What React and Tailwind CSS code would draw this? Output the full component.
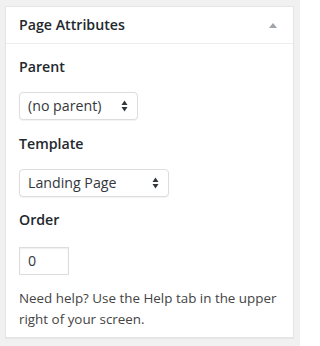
import React from "react";

function SelectBox({ value, width }) {
  return (
    <div
      className={`flex h-[28px] items-center justify-between rounded-[4px] border border-[#dddddd] bg-white pl-[8px] pr-[9px] shadow-[0_1px_1px_rgba(0,0,0,0.05)] ${width}`}
    >
      <span className="text-[14.2px] leading-[20px] text-[#32373c]">{value}</span>
      {/* up/down arrows */}
      <svg width="7" height="12" viewBox="0 0 7 12" className="text-[#32373c]">
        <path d="M3.5 0.5 L6.5 5 L0.5 5 Z" fill="currentColor" />
        <path d="M3.5 11.5 L6.5 7 L0.5 7 Z" fill="currentColor" />
      </svg>
    </div>
  );
}

export default function App() {
  return (
    <div
      className="h-[346px] w-[300px] bg-[#f1f1f1] pt-[6px] pl-[5px]"
      style={{ fontFamily: '"Open Sans", "Noto Sans", sans-serif' }}
    >
      <div className="w-[289px] border border-[#e5e5e5] bg-white shadow-[0_1px_1px_rgba(0,0,0,0.04)]">
        {/* Header */}
        <div className="flex h-[37px] items-center justify-between border-b border-[#eeeeee] pl-[13px] pr-[16px]">
          <h2 className="text-[14.2px] font-semibold leading-[20px] text-[#23282d]">Page Attributes</h2>
          <svg width="8" height="5" viewBox="0 0 8 5">
            <path d="M4 0 L8 5 L0 5 Z" fill="#a0a5aa" />
          </svg>
        </div>

        {/* Body */}
        <div className="pl-[13px] pr-[12px] pt-[13px] pb-[7px] text-[#444444]">
          <p className="text-[14.2px] font-semibold leading-[20px] text-[#23282d]">Parent</p>
          <div className="mt-[15px]">
            <SelectBox value="(no parent)" width="w-[119px]" />
          </div>

          <p className="mt-[14px] text-[14.2px] font-semibold leading-[20px] text-[#23282d]">Template</p>
          <div className="mt-[15px]">
            <SelectBox value="Landing Page" width="w-[150px]" />
          </div>

          <p className="mt-[13px] text-[14.2px] font-semibold leading-[20px] text-[#23282d]">Order</p>
          <div className="mt-[17px] flex h-[28px] w-[50px] items-center border border-[#dddddd] bg-white pl-[8px] shadow-[inset_0_1px_2px_rgba(0,0,0,0.07)]">
            <span className="text-[14.2px] leading-[20px] text-[#32373c]">0</span>
          </div>

          <p className="mt-[13px] text-[13.4px] leading-[21px] text-[#444444]">
            Need help? Use the Help tab in the upper right of your screen.
          </p>
        </div>
      </div>
    </div>
  );
}
